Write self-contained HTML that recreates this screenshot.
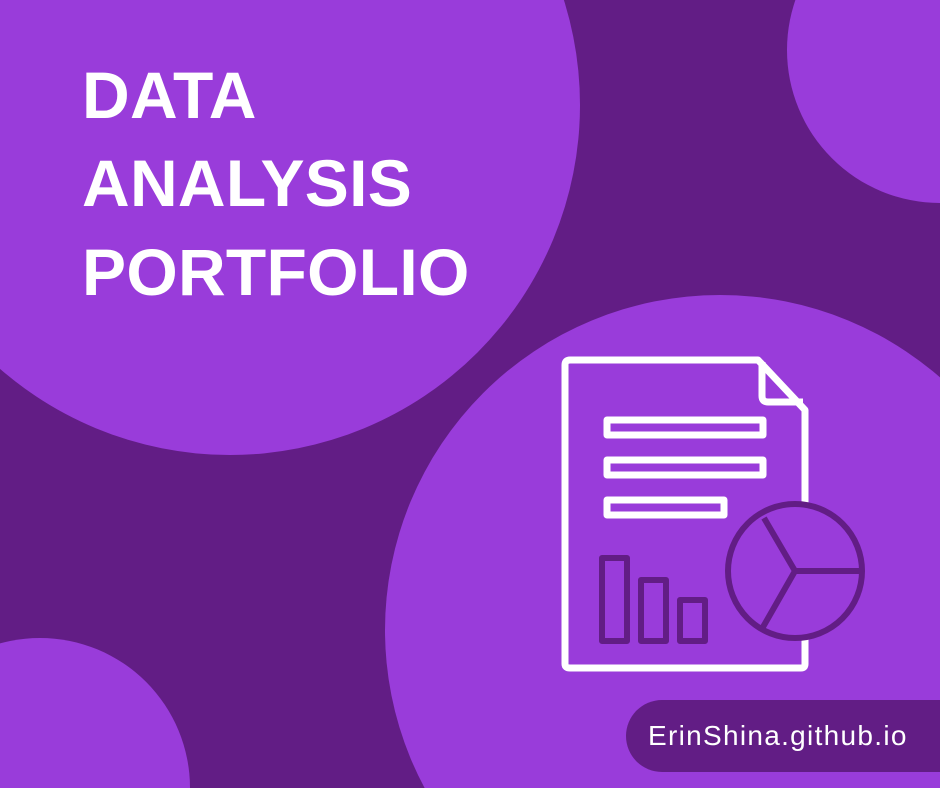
<!DOCTYPE html>
<html><head><meta charset="utf-8"><style>
html,body{margin:0;padding:0;width:940px;height:788px;overflow:hidden}
body{background:#621d85;font-family:"Liberation Sans",sans-serif}
#w{position:relative;width:940px;height:788px;overflow:hidden;background:#621d85}
.t{position:absolute;left:82px;color:#fff;font-weight:bold;font-size:66px;line-height:1;letter-spacing:0.3px}
.pill{position:absolute;left:626px;top:700px;width:314px;height:72px;border-radius:36px 0 0 36px;background:#621d85;color:#fff;font-size:28px;line-height:72px;padding-left:22px;box-sizing:border-box;letter-spacing:1.3px;white-space:nowrap}
</style></head><body><div id="w">
<svg style="position:absolute;left:0;top:0" width="940" height="788" viewBox="0 0 940 788">
<g fill="#993cda">
<circle cx="230" cy="105" r="350"/>
<circle cx="940" cy="50" r="153"/>
<circle cx="720" cy="630" r="335"/>
<circle cx="40" cy="788" r="150"/>
</g>
<g fill="none" stroke="#fff" stroke-width="7" stroke-linejoin="round">
<path d="M570 360 H758 L805 410 V664 Q805 668 801 668 H570 Q565 668 565 664 V365 Q565 360 570 360 Z"/>
<path d="M762 362 V396 Q762 402 768 402 H803"/>
<rect x="607" y="420" width="156" height="15"/>
<rect x="607" y="460" width="156" height="15"/>
<rect x="607" y="500" width="117" height="15"/>
</g>
<g stroke="#621d85" stroke-width="6" stroke-linejoin="round">
<circle cx="795" cy="571" r="67" fill="#993cda"/>
<path d="M764 518 L795 571 L861 571 M795 571 L763 627" fill="none"/>
<rect x="602" y="558" width="25" height="83" fill="none"/>
<rect x="641" y="580" width="25" height="61" fill="none"/>
<rect x="680" y="600" width="25" height="41" fill="none"/>
</g>
</svg>
<div class="t" style="top:62px">DATA</div>
<div class="t" style="top:150px">ANALYSIS</div>
<div class="t" style="top:239px">PORTFOLIO</div>
<div class="pill">ErinShina.github.io</div>
</div></body></html>
